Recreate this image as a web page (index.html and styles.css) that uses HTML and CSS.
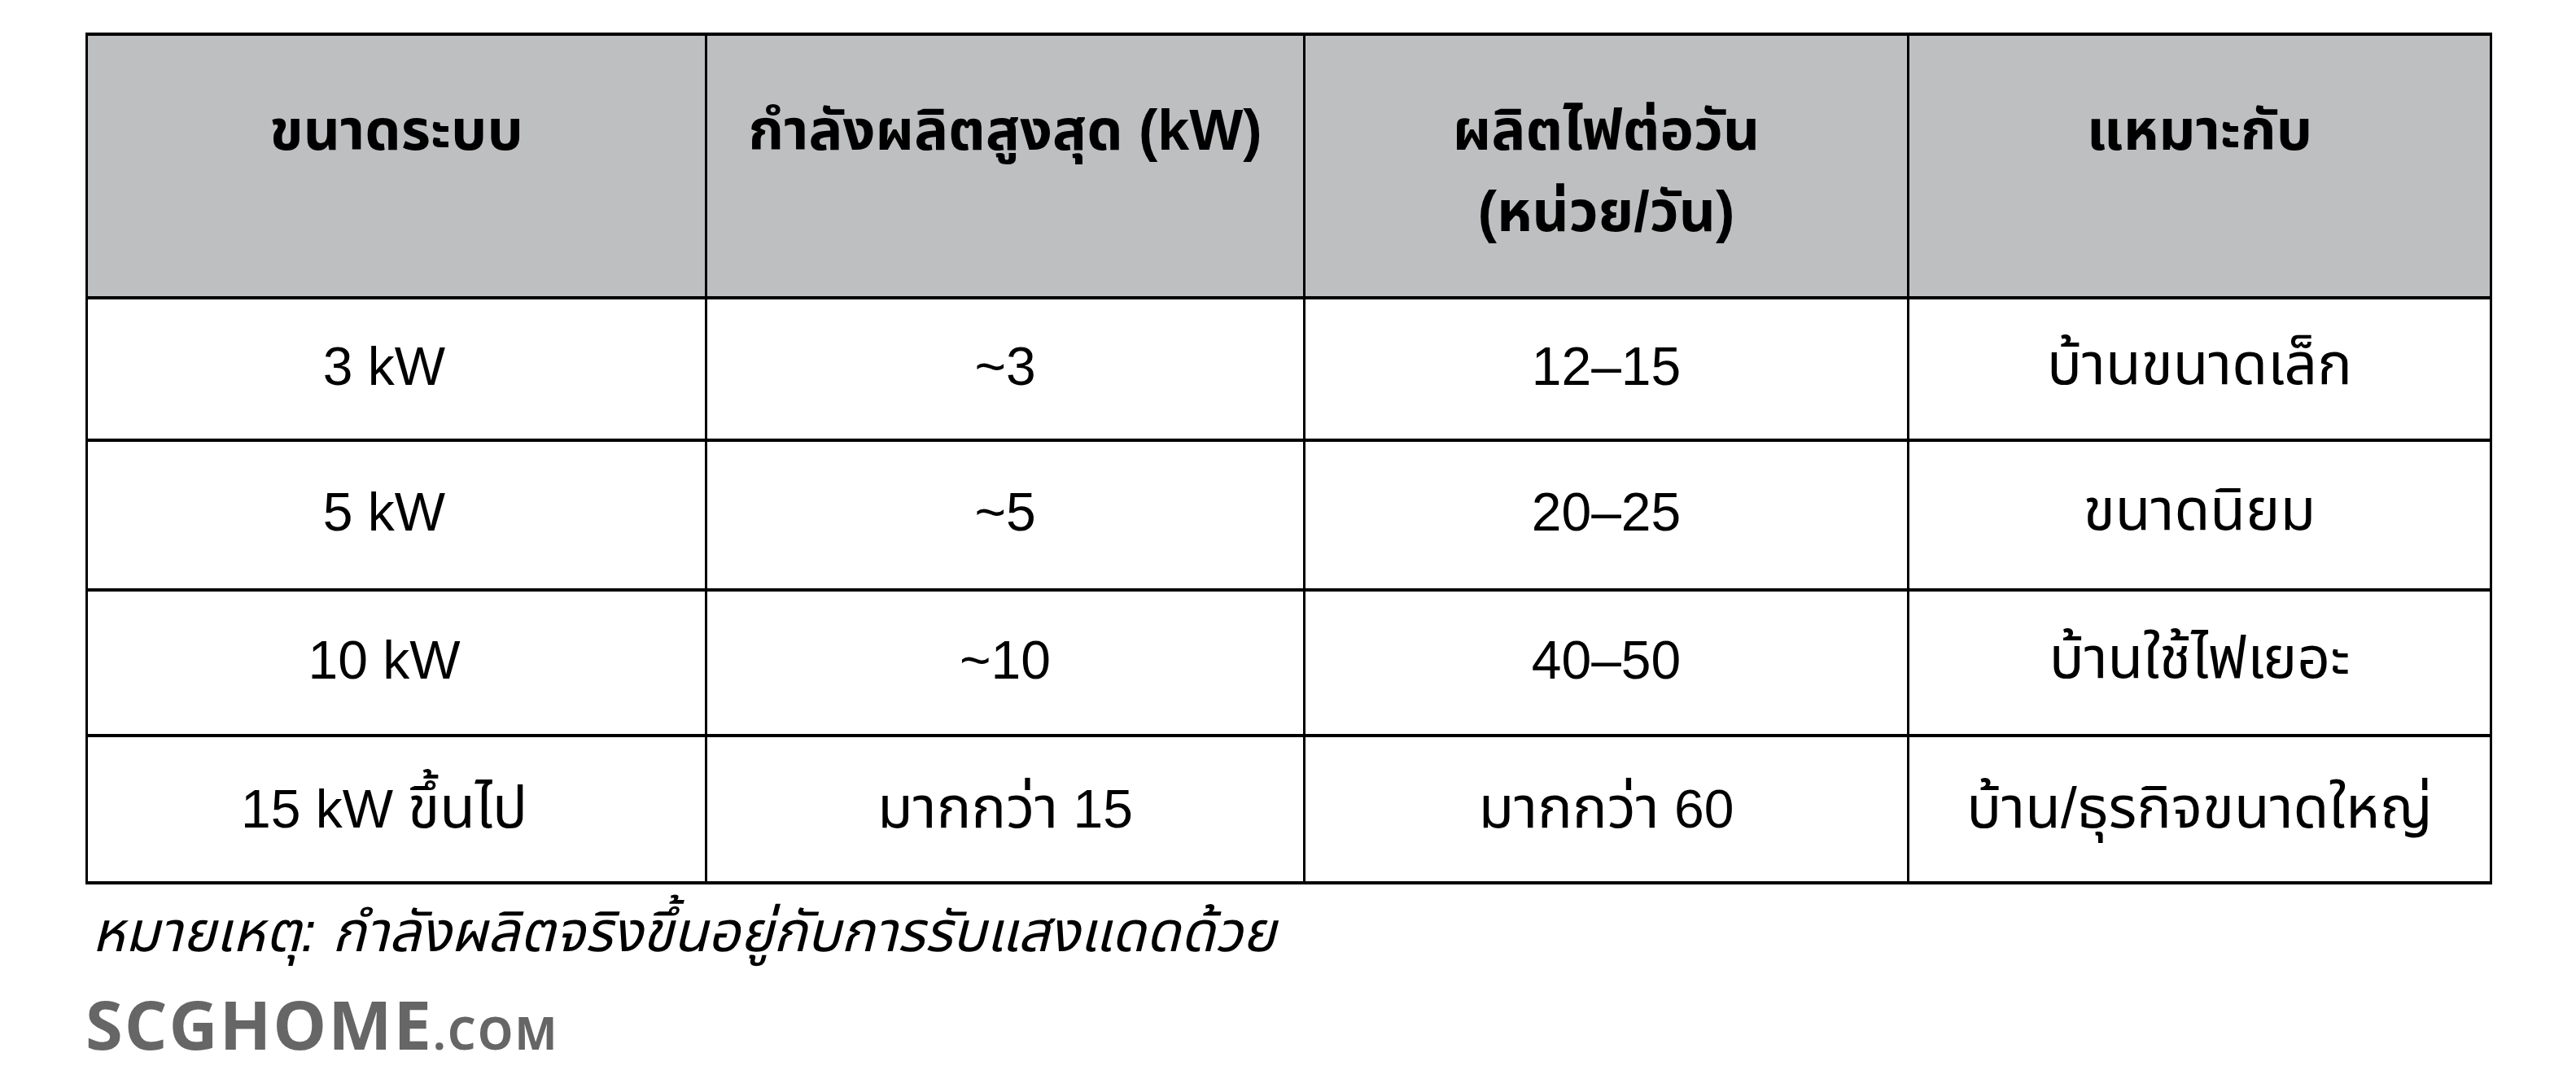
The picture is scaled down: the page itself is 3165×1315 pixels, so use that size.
FILE: index.html
```html
<!DOCTYPE html>
<html lang="th">
<head>
<meta charset="utf-8">
<title>ขนาดระบบโซลาร์</title>
<link rel="stylesheet" href="styles.css">
</head>
<body>
<div class="page">
  <table class="spec">
    <colgroup>
      <col class="c1"><col class="c2"><col class="c3"><col class="c4">
    </colgroup>
    <thead>
      <tr class="head">
        <th>ขนาดระบบ</th>
        <th>กำลังผลิตสูงสุด (kW)</th>
        <th>ผลิตไฟต่อวัน<br>(หน่วย/วัน)</th>
        <th>แหมาะกับ</th>
      </tr>
    </thead>
    <tbody>
      <tr class="r1"><td>3 kW</td><td>~3</td><td>12–15</td><td><span class="th">บ้านขนาดเล็ก</span></td></tr>
      <tr class="r2"><td>5 kW</td><td>~5</td><td>20–25</td><td><span class="th">ขนาดนิยม</span></td></tr>
      <tr class="r3"><td>10 kW</td><td>~10</td><td>40–50</td><td><span class="th">บ้านใช้ไฟเยอะ</span></td></tr>
      <tr class="r4"><td>15 kW <span class="th">ขึ้นไป</span></td><td><span class="th">มากกว่า</span> 15</td><td><span class="th">มากกว่า</span> 60</td><td><span class="th">บ้าน/ธุรกิจขนาดใหญ่</span></td></tr>
    </tbody>
  </table>
  <p class="note">หมายเหตุ: กำลังผลิตจริงขึ้นอยู่กับการรับแสงแดดด้วย</p>
  <div class="brand">SCGHOME<span class="dot">.COM</span></div>
</div>
</body>
</html>
```
FILE: styles.css
```css
html, body {
  margin: 0;
  padding: 0;
  background: #ffffff;
}
body {
  font-family: "Liberation Sans", "Noto Sans Thai", "Noto Sans", sans-serif;
  color: #000;
}
.page {
  padding: 40px 0 0 105px;
}
.spec {
  border-collapse: collapse;
  width: 2954px;
  table-layout: fixed;
}
.c1 { width: 761px; }
.c2 { width: 735px; }
.c3 { width: 742px; }
.c4 { width: 716px; }
.spec th, .spec td {
  border-top: 4px solid #000;
  border-bottom: 4px solid #000;
  border-left: 3px solid #000;
  border-right: 3px solid #000;
  text-align: center;
  padding: 0;
}
.spec th {
  background: #bebfc1;
  font-weight: 700;
  font-size: 70px;
  line-height: 100px;
  vertical-align: top;
  padding-top: 66px;
}
.head { height: 324px; }
.spec td {
  font-size: 66px;
  font-weight: 400;
  vertical-align: middle;
  padding-bottom: 8px;
}
.spec td:first-child {
  padding-right: 30px;
}
.spec td .th {
  font-size: 1.08em;
}
.r1 { height: 175px; }
.r2 { height: 184px; }
.r3 { height: 179px; }
.r4 { height: 181px; }
.r4 td { padding-bottom: 0; }
.note {
  margin: 16px 0 0 8px;
  font-style: italic;
  font-size: 69px;
  line-height: 86px;
}
.brand {
  margin-top: 28px;
  font-family: "Open Sans", "Liberation Sans", sans-serif;
  font-weight: 700;
  font-size: 83px;
  line-height: 81px;
  letter-spacing: 2px;
  color: #666666;
}
.brand .dot {
  font-size: 55px;
}
```
